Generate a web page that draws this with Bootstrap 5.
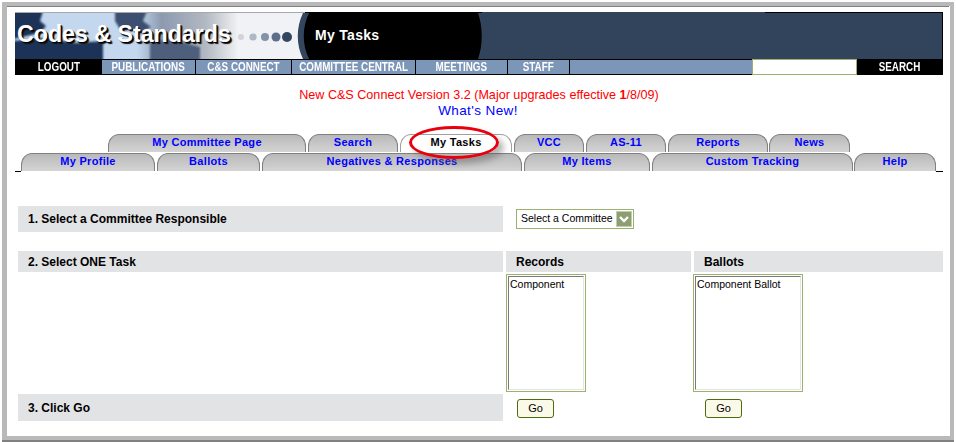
<!DOCTYPE html>
<html lang="en"><head><meta charset="utf-8"><title>My Tasks</title>
<link href="https://cdn.jsdelivr.net/npm/bootstrap@5.3.0/dist/css/bootstrap.min.css" rel="stylesheet">
<style>
html,body{margin:0;background:#fff}
body{width:956px;height:442px;overflow:hidden;font-family:"Liberation Sans",Arial,sans-serif;font-size:12px;color:#000}
.frame{margin:2px 0 0 2px;width:952px;height:440px;border-bottom:2px solid #808080}
.frame-mid{height:438px;border:solid #b9b9b9;border-width:4px 4px 4px 5px}
.frame-in{height:100%;border-top:1px solid #808080;margin-right:1px;padding:5px 0 0 8px}
.banner-edge{width:928px;height:1px;background:linear-gradient(90deg,#a8a8a8 0,#a8a8a8 290px,#000 290px,#000 467px,#32445b 467px,#32445b 750px,#000 750px)}
.banner{width:928px;height:46px;background:#32445b;border-right:1px solid #000}
.banner svg{display:block}
.banner-art{position:relative;width:470px;height:46px;flex:none}
.logo-text{position:absolute;left:2px;top:6px;font-size:23.2px;font-weight:700;color:#fff;text-shadow:1px 1px 0 #000,2px 2px 1px #111;line-height:30px;white-space:nowrap}
.page-title{position:absolute;left:300px;top:13px;font-size:14px;font-weight:700;color:#fff;line-height:18px;letter-spacing:.3px}
.topnav{width:928px;height:16px;background:#000;font-weight:700;font-size:13.5px;color:#fff;line-height:14px;border-top:1px solid #000;border-bottom:1px solid #000}
.topnav>div{background:#7c96b7;border-right:1px solid #000;flex:none;display:flex;justify-content:center}
.topnav span{display:inline-block;white-space:nowrap;transform:scaleX(.73)}
.topnav .n-out{background:#000;border:0;width:87px}
.topnav .n1{width:94px}.topnav .n2{width:96px}.topnav .n3{width:124px}.topnav .n4{width:92px}.topnav .n5{width:62px}
.topnav .n6{width:182px;border-right:0}
.topnav .n-in{width:105px;background:#fff;border:1px solid #9bb26f;margin:-1px 0}
.topnav .n-go{width:86px;background:#000;border:0}
.notice{text-align:center;padding-top:13px;font-size:12.6px;line-height:15px;color:#f00;width:928px}
.notice .bold1{font-weight:700}
.whatsnew{font-size:13.5px;line-height:15px;color:#00f;letter-spacing:.4px;margin-left:-2px}
.tabs{position:relative;width:928px;height:38px;margin-top:16px}
.tabrow{height:18px;margin-bottom:1px;font-weight:700;font-size:11px;line-height:15px;letter-spacing:.3px}
.tabrow.r1{padding-left:93px}.tabrow.r2{padding-left:6px}
.tb{flex:none;text-align:center;color:#00f;height:18px;background:linear-gradient(#b9b9b9,#d4d4d4);border:solid #808080;border-width:1px 1px 0 1px;border-radius:11px 11px 0 0/12px 12px 0 0;margin-right:2px}
.tb.on{background:#fff;color:#000;border-color:#a0a0a0}
.rule{position:absolute;height:1px;background:#000;top:37px}
.rule.l{left:0;width:6px}.rule.rr{right:0;width:7px}
.ring{position:absolute;left:394px;top:-8px;width:90px;height:33px;border:3px solid #e8000c;border-radius:50%;box-shadow:5px 5px 6px rgba(90,90,90,.45);pointer-events:none}
.w-a{width:198px}.w-b{width:90px}.w-c{width:112px}.w-d{width:70px}.w-e{width:80px}.w-f{width:100px;margin-right:1px}.w-g{width:81px}
.w-h{width:134px}.w-i{width:103px}.w-j{width:260px}.w-k{width:126px}.w-l{width:201px;margin-right:1px}.w-m{width:82px}
.form-area{width:928px;margin-top:34px;font-size:12px}
.lbl{background:#e2e3e5;font-weight:700;padding-left:10px;flex:none}
.step1{height:26px;line-height:26px}
.lbl-l{width:485px;margin-left:3px;margin-right:3px}
.lbl-r{width:185px;margin-right:3px}
.lbl-b{width:249px}
.sel{margin-left:10px;margin-top:3px;width:118px;height:20px;border:1px solid #9bb26f;display:flex;align-items:center;padding:0 1px 0 4px;font-size:10.5px;justify-content:space-between;white-space:nowrap}
.sel svg{display:block}
.step2{margin-top:19px;height:21px;line-height:22px}
.lists{height:119px;margin-top:2px;padding-left:491px}
.lb{flex:none;width:80px;height:118px;border:1px solid #9bb26f;padding:1px;font-size:10.5px;line-height:14px}
.lb>div{height:100%;border:1px solid;border-color:#7a7a7a #e4e4e4 #e4e4e4 #7a7a7a;padding:0 1px}
.lb.b1{margin-right:107px}
.lb.b2{width:110px}
.step3{margin-top:1px;height:27px;line-height:29px}
.gobtn{background:#fbfae9;border:1px solid #4c6b12;border-radius:3px;width:37px;height:19px;font-size:11px;line-height:17px;text-align:center;padding:0;color:#000;display:block;flex:none;margin-top:5px}
.gobtn.g1{margin-left:11px;margin-right:151px}
</style></head><body>
<div class="frame"><div class="frame-mid"><div class="frame-in">
<div class="banner-edge"></div>
<div class="banner d-flex">
<div class="banner-art">
<svg width="470" height="46" viewBox="0 0 470 46">
<defs>
<linearGradient id="gr" x1="0" x2="1" y1="0" y2="0"><stop offset="0" stop-color="#c3d8ef"/><stop offset=".55" stop-color="#c3d8ef"/><stop offset=".66" stop-color="#8c9ab0"/><stop offset=".86" stop-color="#b3b9c2"/><stop offset="1" stop-color="#eef0f3"/></linearGradient>
<filter id="bl"><feGaussianBlur stdDeviation="1"/></filter>
</defs>
<rect width="470" height="46" fill="#000"/>
<path d="M0 0H290C284 14 284 32 290 46H0z" fill="#f0f2f5"/>
<rect width="222" height="46" fill="url(#gr)"/>
<g filter="url(#bl)">
<path d="M-2-2h30l-3 10 6 5-6 7-27 6z" fill="#1d3256"/>
<path d="M-2 28l32-3 30 5 28-2v20H-2z" fill="#1c3257"/>
<path d="M100-2h32l-4 10 8 6-10 6-8-4-12 2-6-10z" fill="#3c4f70"/>
<path d="M135 30l20-4 30 8v14h-50z" fill="#4d5f7c"/>
</g>
<path d="M288 0c-7 14-7 32 0 46h6c-7-14-7-32 0-46z" fill="#34465e"/>
<path d="M463 0c5 14 5 32 0 46h7V0z" fill="#32445b"/>
<circle cx="226" cy="24" r="3" fill="#d0d4da"/><circle cx="238" cy="24" r="3.6" fill="#aeb8c6"/><circle cx="250" cy="24" r="4" fill="#8392a8"/><circle cx="261" cy="24" r="4.5" fill="#5c6f8a"/><circle cx="272" cy="24" r="5" fill="#34465e"/>
</svg>
<div class="logo-text">Codes &amp; Standards</div>
<div class="page-title">My Tasks</div>
</div>
</div>
<nav class="topnav d-flex">
<div class="n-out"><span>LOGOUT</span></div><div class="n1"><span>PUBLICATIONS</span></div><div class="n2"><span>C&amp;S CONNECT</span></div><div class="n3"><span>COMMITTEE CENTRAL</span></div><div class="n4"><span>MEETINGS</span></div><div class="n5"><span>STAFF</span></div><div class="n6"></div><div class="n-in"></div><div class="n-go"><span>SEARCH</span></div>
</nav>
<div class="notice"><div>New C&amp;S Connect Version 3.2 (Major upgrades effective <span class="bold1">1</span>/8/09)</div><div class="whatsnew">What's New!</div></div>
<div class="tabs">
<div class="tabrow r1 d-flex">
<div class="tb w-a">My Committee Page</div><div class="tb w-b">Search</div><div class="tb on w-c">My Tasks</div><div class="tb w-d">VCC</div><div class="tb w-e">AS-11</div><div class="tb w-f">Reports</div><div class="tb w-g">News</div>
</div>
<div class="tabrow r2 d-flex">
<div class="tb w-h">My Profile</div><div class="tb w-i">Ballots</div><div class="tb w-j">Negatives &amp; Responses</div><div class="tb w-k">My Items</div><div class="tb w-l">Custom Tracking</div><div class="tb w-m">Help</div>
</div>
<div class="rule l"></div><div class="rule rr"></div>
<div class="ring"></div>
</div>
<div class="form-area">
<div class="d-flex"><div class="lbl lbl-l step1">1. Select a Committee Responsible</div>
<div class="sel"><span>Select a Committee</span><svg width="16" height="16" viewBox="0 0 16 16"><rect x=".5" y=".5" width="15" height="15" fill="#8d9e71" stroke="#c2cdb0"/><path d="M4 6l4 4 4-4" fill="none" stroke="#fff" stroke-width="2.4"/></svg></div></div>
<div class="d-flex step2"><div class="lbl lbl-l">2. Select ONE Task</div><div class="lbl lbl-r">Records</div><div class="lbl lbl-b">Ballots</div></div>
<div class="lists d-flex"><div class="lb b1"><div>Component</div></div><div class="lb b2"><div>Component Ballot</div></div></div>
<div class="d-flex step3"><div class="lbl lbl-l">3. Click Go</div><button class="gobtn g1">Go</button><button class="gobtn">Go</button></div>
</div>
</div></div></div>
<script src="https://cdn.jsdelivr.net/npm/bootstrap@5.3.0/dist/js/bootstrap.bundle.min.js"></script>
</body></html>
